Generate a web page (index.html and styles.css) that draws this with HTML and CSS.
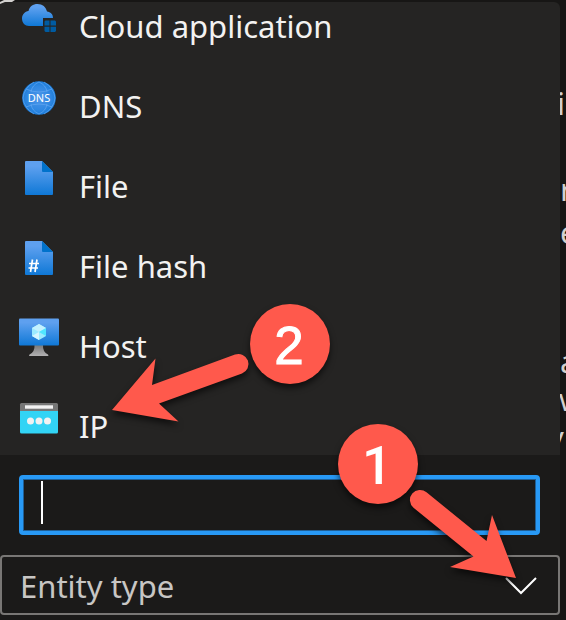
FILE: index.html
```html
<!DOCTYPE html>
<html lang="en">
<head>
<meta charset="utf-8">
<title>Entity type</title>
<link rel="stylesheet" href="styles.css">
</head>
<body>
<svg class="defs" width="0" height="0" aria-hidden="true">
  <defs>
    <linearGradient id="blue" x1="0" y1="0" x2="0" y2="1"><stop offset="0.15" stop-color="#5ea0ef"/><stop offset="1" stop-color="#0f78d6"/></linearGradient>
    <radialGradient id="globe"><stop offset="0" stop-color="#4d96ea"/><stop offset="0.7" stop-color="#3088e2"/><stop offset="1" stop-color="#1a7cd9"/></radialGradient>
    <linearGradient id="stand" x1="0" y1="0" x2="0" y2="1"><stop offset="0" stop-color="#777"/><stop offset="1" stop-color="#b3b2b3"/></linearGradient>
  </defs>
</svg>
<div class="page">
  <main class="picker">
    <div class="options" role="listbox" aria-label="Entity types">
      <button class="option" role="option">
        <svg class="icon" viewBox="0 0 40 40" aria-hidden="true">
          <path fill="url(#blue)" d="M10 28C6 28 3 25 3 20.500C3 16.500 6 13.500 9.500 13C10.500 8.500 14 6 18.500 6C23.500 6 27 9 28 13.500C31.500 14 34 16 34 20H24V28Z"/>
          <path fill="#005ba1" d="M26.500 22.500H30.500V27.500H25.500V23.500ZM31.500 22.500H36L37 23.500V27.500H31.500ZM25.500 28.800H30.500V34H26.500L25.500 33ZM31.500 28.800H37V33L36 34H31.500Z"/>
        </svg>
        <span class="label">Cloud application</span>
      </button>
      <button class="option" role="option">
        <svg class="icon" viewBox="0 0 40 40" aria-hidden="true">
          <circle cx="20" cy="20" r="16.800" fill="url(#globe)"/>
          <g fill="none" stroke="#64a7f0" stroke-width="0.700">
            <path d="M7 11Q20 17 33 11M7 29Q20 23 33 29M12 14Q13 7 20 4Q27 7 28 14M12 26Q13 33 20 36Q27 33 28 26M15 4Q5 10 4 20Q5 30 15 36M25 4Q35 10 36 20Q35 30 25 36"/>
          </g>
          <text class="dns" x="20" y="24" text-anchor="middle">DNS</text>
        </svg>
        <span class="label">DNS</span>
      </button>
      <button class="option" role="option">
        <svg class="icon" viewBox="0 0 40 40" aria-hidden="true">
          <path fill="url(#blue)" d="M7 3H23L34 14V36Q34 37 33 37H7Q6 37 6 36V4Q6 3 7 3Z"/>
          <path fill="#0072cc" d="M23 3L34 14H24Q23 14 23 13Z"/>
        </svg>
        <span class="label">File</span>
      </button>
      <button class="option" role="option">
        <svg class="icon" viewBox="0 0 40 40" aria-hidden="true">
          <path fill="url(#blue)" d="M7 3H23L34 14V36Q34 37 33 37H7Q6 37 6 36V4Q6 3 7 3Z"/>
          <path fill="#0072cc" d="M23 3L34 14H24Q23 14 23 13Z"/>
          <path fill="none" stroke="#fff" stroke-width="1.700" d="M13.500 21.500L11.500 34M18 21.500L16 34M10 25.500H20M9.500 30H19"/>
        </svg>
        <span class="label">File hash</span>
      </button>
      <button class="option" role="option">
        <svg class="icon" viewBox="0 0 40 40" aria-hidden="true">
          <path fill="url(#stand)" d="M15.500 27H24Q23.500 34 29 36.500Q30 38 29 38H10.500Q9.500 38 10.500 36.500Q16 34 15.500 27Z"/>
          <rect y="0.500" width="40" height="27" rx="1" fill="url(#blue)"/>
          <path fill="#9cebff" d="M20 6L27 10V18L20 22L13 18V10Z"/>
          <path fill="#c3f1ff" d="M13 10L20 6L27 10L20 14Z"/>
          <path fill="#50e6ff" d="M20 14L27 10V18Z"/>
          <path fill="#d5f6ff" d="M13 18L20 14V22Z"/>
        </svg>
        <span class="label">Host</span>
      </button>
      <button class="option" role="option">
        <svg class="icon" viewBox="0 0 40 40" aria-hidden="true">
          <path fill="#32d4f5" d="M1 12H39V34Q39 35.500 37.500 35.500H2.500Q1 35.500 1 34Z"/>
          <path fill="#767676" d="M2.500 5H37.500Q39 5 39 6.500V13H1V6.500Q1 5 2.500 5Z"/>
          <path fill="#f2f2f2" d="M6 7.300H34V10.700H6Z"/>
          <g fill="#f2f2f2"><circle cx="11.500" cy="23" r="3.500"/><circle cx="20" cy="23" r="3.500"/><circle cx="28.500" cy="23" r="3.500"/></g>
        </svg>
        <span class="label">IP</span>
      </button>
    </div>
    <div class="search">
      <input class="search-input" type="text" aria-label="Search entity types">
      <span class="caret"></span>
    </div>
    <div class="type">
      <select class="type-select" aria-label="Entity type"><option>Entity type</option></select>
      <svg class="chevron" viewBox="0 0 32 18" aria-hidden="true"><path d="M1 1L16 16L31 1"/></svg>
    </div>
  </main>
  <aside class="backdrop">
    <span class="line first">i</span>
    <span class="line">r</span>
    <span class="line">e</span>
    <span class="line tight third">a</span>
    <span class="line tight cut">w</span>
    <span class="line tight cut">y</span>
  </aside>
</div>
<svg class="notes" viewBox="0 0 566 620" role="img" aria-label="Step 1: open the list. Step 2: choose IP.">
  <path fill="#d2d0ce" d="M0 2L4 0H15L12 2H5L0 4Z"/>
  <g class="mark">
    <path d="M112 410L155.500 358.500L152 385L235 354.600A10 10 0 0 1 242 373.400L159 403.500L178.500 421.500Z"/>
    <path d="M516 578L492 515L486.500 541L426.500 492.300A10 10 0 0 0 413.500 507.700L473.500 556.500L450 567Z"/>
    <circle cx="290" cy="344" r="40"/>
    <circle cx="378" cy="464" r="40"/>
  </g>
  <text class="digit two" x="289" y="364" text-anchor="middle">2</text>
  <text class="digit one" x="377" y="484" text-anchor="middle">1</text>
</svg>
</body>
</html>
```
FILE: styles.css
```css
* {
  box-sizing: border-box;
}

body {
  margin: 0;
  background: #171615;
  color: #f3f2f1;
  font: 31px/40px "Noto Sans", "Open Sans", sans-serif;
}

.defs {
  position: absolute;
}

.page {
  display: flex;
  height: 100vh;
  min-height: 400px;
  overflow: hidden;
}

.picker {
  flex: 1;
  min-width: 0;
  display: flex;
  flex-direction: column;
  padding: 2px 0 5px;
  background: linear-gradient(#171615 50%, #1b1a19 50%);
}

.options {
  flex: 1;
  min-height: 0;
  display: flex;
  flex-direction: column;
  justify-content: flex-end;
  overflow: hidden;
  background: #252423;
  border-radius: 0 6px 0 0;
}

.option {
  flex: none;
  display: flex;
  align-items: flex-start;
  gap: 20px;
  height: 80px;
  padding: 23px 19px 0;
  border: 0;
  background: none;
  color: inherit;
  font: inherit;
  text-align: left;
}

.icon {
  flex: none;
  width: 40px;
  height: 40px;
}

.label {
  padding-top: 8px;
  white-space: nowrap;
}

.dns {
  fill: #fff;
  font: 11px "Noto Sans", sans-serif;
}

.search {
  position: relative;
  padding: 20px 20px 20px 19px;
}

.search-input {
  display: block;
  width: 100%;
  height: 60px;
  padding: 0 18px;
  border: 4px solid #2899f5;
  border-radius: 4px;
  outline: 1px solid #1f5f96;
  outline-offset: -5px;
  background: #1b1a19;
  color: inherit;
  font: inherit;
  caret-color: transparent;
}

.caret {
  position: absolute;
  top: 26px;
  left: 41px;
  width: 2px;
  height: 43px;
  background: #fff;
}

.type {
  position: relative;
}

.type-select {
  display: block;
  width: 100%;
  height: 60px;
  padding: 2px 60px 0 18px;
  border: 2px solid #797775;
  border-radius: 4px;
  appearance: none;
  background: #1b1a19;
  color: #c8c6c4;
  font: inherit;
}

.chevron {
  position: absolute;
  top: 22px;
  right: 23px;
  width: 32px;
  height: 18px;
  fill: none;
  stroke: #fff;
  stroke-width: 2;
}

.backdrop {
  flex: none;
  display: flex;
  flex-direction: column;
  width: 6px;
  overflow: hidden;
  color: #d2d0ce;
}

.line {
  line-height: 43px;
}

.tight {
  line-height: 38px;
}

.first {
  margin: 82px 0 43px -3px;
}

.third {
  margin-top: 88px;
}

.cut {
  margin-left: -12px;
}

.notes {
  position: absolute;
  top: 0;
  left: 0;
  width: 566px;
  pointer-events: none;
}

.mark {
  fill: #ff594c;
  filter: drop-shadow(0 4px 3px rgb(0 0 0 / 60%));
}

.digit {
  fill: #fff;
  font-size: 53px;
}

.one {
  font-family: Roboto, sans-serif;
  font-weight: 500;
}

.two {
  font-family: "Liberation Sans", sans-serif;
  stroke: #fff;
  stroke-width: 1px;
}
```
